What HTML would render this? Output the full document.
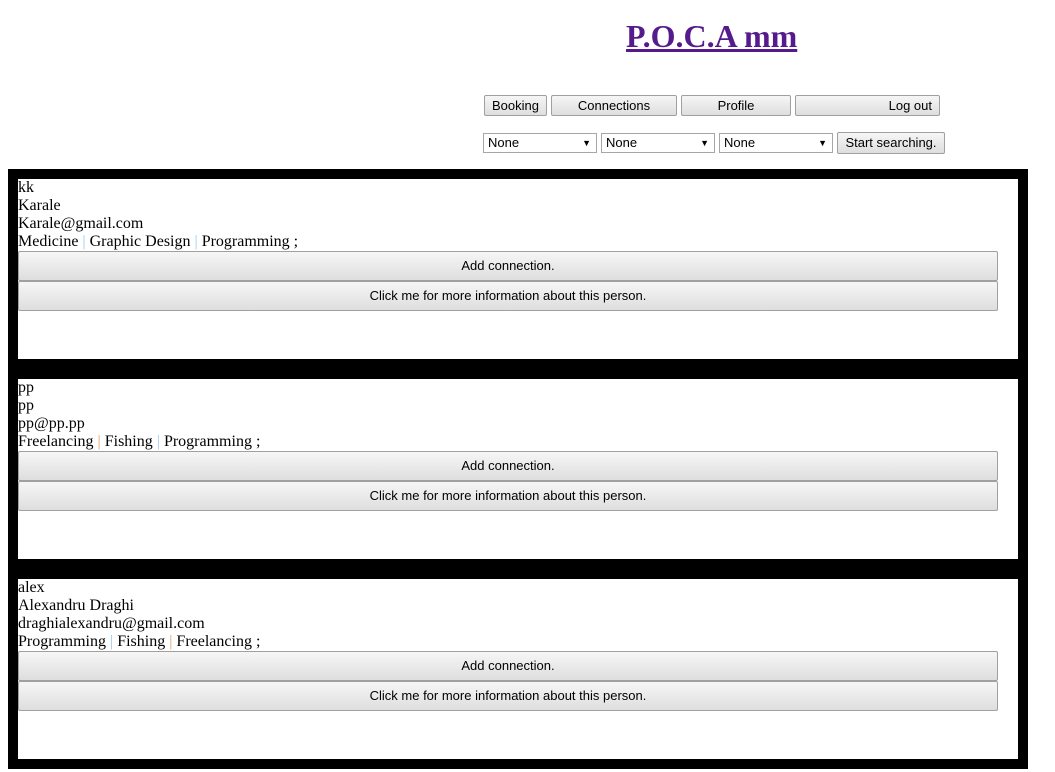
<!DOCTYPE html>
<html><head><style>
body{margin:0;width:1055px;height:772px;overflow:hidden;background:#fff;font-family:"Liberation Serif",serif;font-size:16px;position:relative}
a.t{position:absolute;left:626px;top:16px;font-size:32px;font-weight:bold;color:#551a8b;text-decoration:underline;line-height:40px}
.b{position:absolute;box-sizing:border-box;border:1px solid #a0a0a0;border-radius:2px;background:linear-gradient(#f6f6f6,#dedede);font-family:"Liberation Sans",sans-serif;font-size:13px;color:#000;text-align:center;line-height:19px;height:21px}
.s{position:absolute;box-sizing:border-box;border:1px solid #a6a6a6;background:#fff;font-family:"Liberation Sans",sans-serif;font-size:13px;height:20px;line-height:18px;padding-left:4px;top:133px;width:114px}
.s:after{content:"▼";position:absolute;right:5px;top:0;font-size:9px}
.card{position:absolute;left:8px;width:1000px;height:180px;border:10px solid #000;background:#fff;line-height:18px}
.cb{box-sizing:border-box;width:980px;height:30px;border:1px solid #a0a0a0;border-radius:2px;background:linear-gradient(#f6f6f6,#dedede);font-family:"Liberation Sans",sans-serif;font-size:13px;text-align:center;line-height:28px}
.p1{color:#9cc8f0}.p2{color:#e8a060}
</style></head><body>
<a class="t">P.O.C.A mm</a>
<div class="b" style="left:484px;top:95px;width:63px">Booking</div>
<div class="b" style="left:551px;top:95px;width:126px">Connections</div>
<div class="b" style="left:681px;top:95px;width:110px">Profile</div>
<div class="b" style="left:795px;top:95px;width:145px;text-align:right;padding-right:7px">Log out</div>
<div class="s" style="left:483px">None</div>
<div class="s" style="left:601px">None</div>
<div class="s" style="left:719px">None</div>
<div class="b" style="left:837px;top:132px;width:108px;height:22px;line-height:20px">Start searching.</div>
<div class="card" style="top:169px">kk<br>Karale<br>Karale@gmail.com<br>Medicine <span class="p1">|</span> Graphic Design <span class="p1">|</span> Programming ;<div class="cb">Add connection.</div><div class="cb">Click me for more information about this person.</div></div>
<div class="card" style="top:369px">pp<br>pp<br>pp@pp.pp<br>Freelancing <span class="p2">|</span> Fishing <span class="p1">|</span> Programming ;<div class="cb">Add connection.</div><div class="cb">Click me for more information about this person.</div></div>
<div class="card" style="top:569px">alex<br>Alexandru Draghi<br>draghialexandru@gmail.com<br>Programming <span class="p1">|</span> Fishing <span class="p2">|</span> Freelancing ;<div class="cb">Add connection.</div><div class="cb">Click me for more information about this person.</div></div>
</body></html>
